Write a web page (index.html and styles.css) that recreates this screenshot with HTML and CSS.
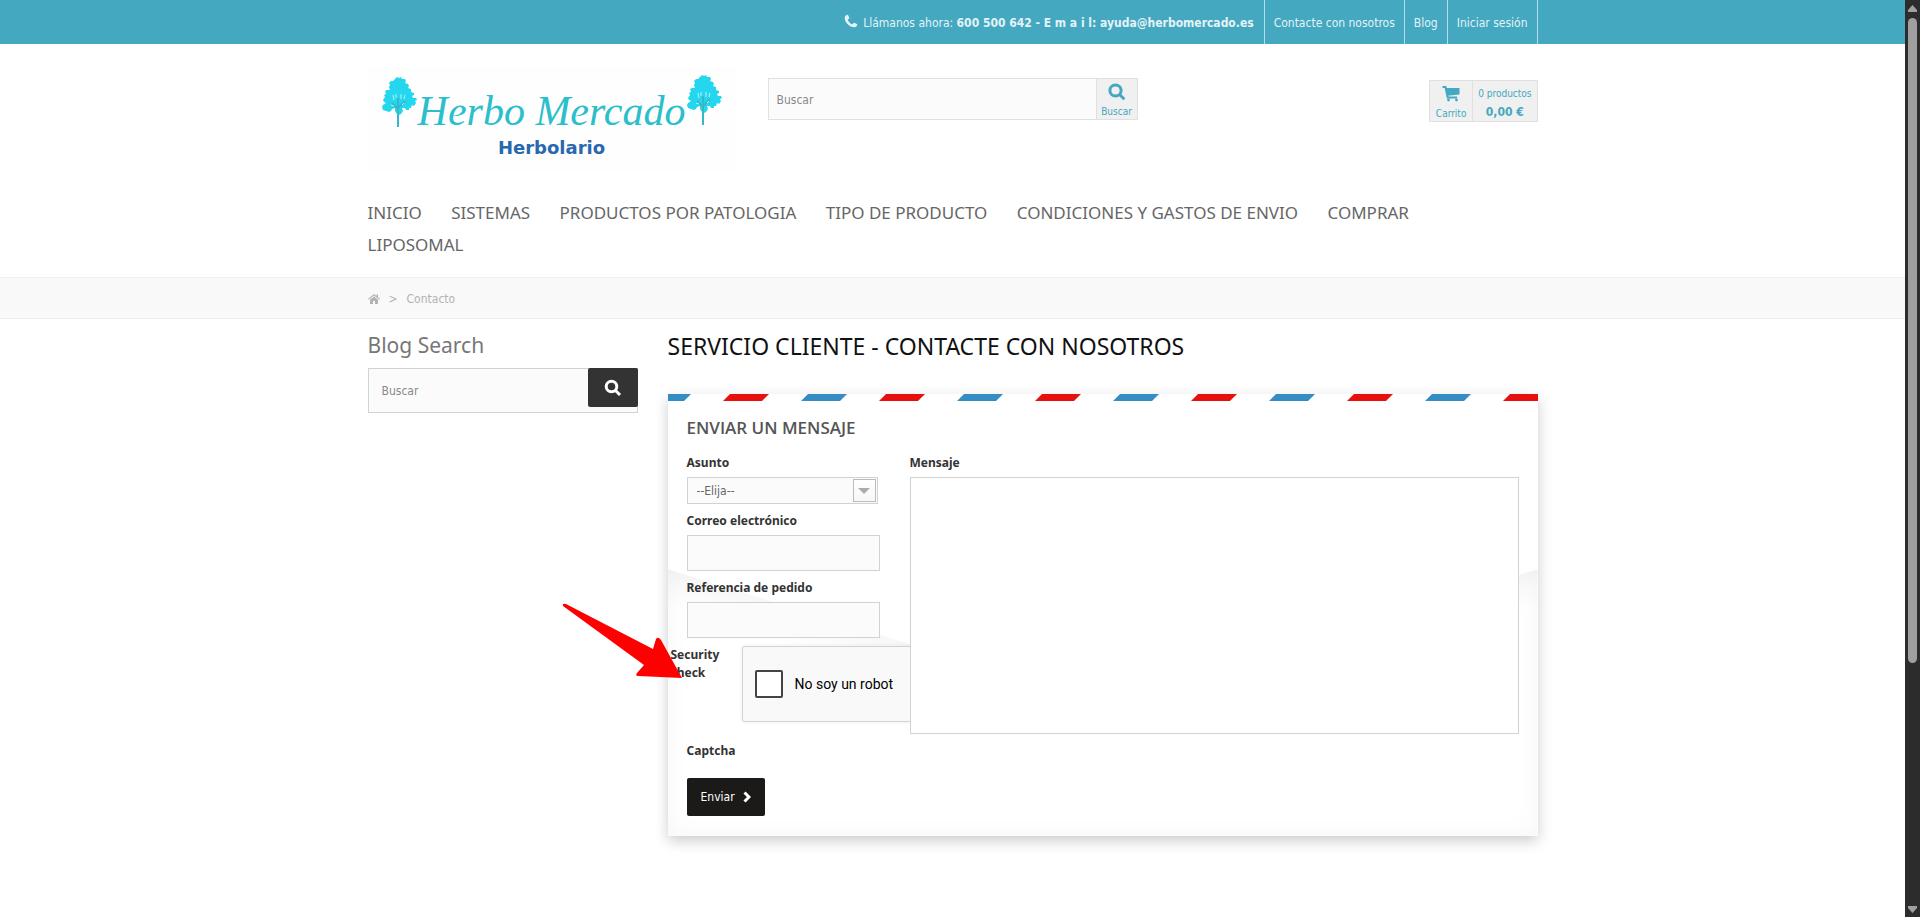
FILE: index.html
```html
<!DOCTYPE html>
<html lang="es">
<head>
<meta charset="utf-8">
<title>Contacto - Herbo Mercado</title>
<link rel="stylesheet" href="styles.css">
</head>
<body>
<div class="page">
  <div class="topbar">
    <div class="container topbar-row">
      <p class="phone">
        <svg class="phone-icon" viewBox="0 0 14 14" aria-hidden="true"><path d="M1 2.600C1.500 1.400 2.800.600 3.700.700c.400.100 1.600 2.600 1.600 3.200 0 .700-1.500 1.300-1.500 2 0 1 3.300 4.300 4.300 4.300.700 0 1.300-1.500 2-1.500.600 0 3.100 1.300 3.200 1.700.100.900-.700 2.200-1.900 2.700C6.500 14.500-.800 7.500 1 2.600z"/></svg>
        <span>Llámanos ahora: <strong>600 500 642 - E m a i l: ayuda@herbomercado.es</strong></span>
      </p>
      <nav class="topnav">
        <a href="#contacto">Contacte con nosotros</a>
        <a href="#blog">Blog</a>
        <a href="#sesion">Iniciar sesión</a>
      </nav>
    </div>
  </div>

  <header class="container header">
    <a class="logo" href="#inicio">
      <svg class="tree" viewBox="0 0 35 52" aria-hidden="true"><use href="#tree"/></svg>
      <span class="logo-text"><span class="logo-name">Herbo Mercado</span><span class="logo-sub">Herbolario</span></span>
      <svg class="tree tree-right" viewBox="0 0 35 52" aria-hidden="true">
        <g id="tree">
          <path d="M13 3l2-2 2 1 2-1 1 2 3 0 1 2-1 2 3 1 1 2-1 2 3 1 0 3 3 1 0 2-2 1 1 2 3 0 1 2-2 1 1 2-2 3-2-1-1 3-2 0 0 2-3 0-1-2-3 0 1 3-2 3-2 1-2-1-2-3 0-3-3 1-1 2-2 1-3-1-3-1-1-3 1-2 3-2-2-1-1-2 2-3-1-2 2-1-1-3 2-1 3 0-1-3 1-2-1-2 2-2 2 0z"/>
          <path class="trunk" d="M16 22v29M16 33l-6-6M16 32l7-7"/>
          <path class="gaps" d="M11 19l1 5M14 18l0 4M19 18l0 5M23 19l-1 4M9 29l3 1M20 29l2-2"/>
        </g>
      </svg>
    </a>
    <form class="search">
      <input type="text" placeholder="Buscar" aria-label="Buscar">
      <button type="button">
        <svg viewBox="0 0 18 18" aria-hidden="true"><circle cx="7.500" cy="7.500" r="5.600"/><path d="M11.800 11.800l4.500 4.500"/></svg>
        <span>Buscar</span>
      </button>
    </form>
    <a class="cart" href="#carrito">
      <span class="cart-label">
        <svg viewBox="0 0 18 16" aria-hidden="true"><path d="M.5 1h3l2.200 10.500H15" class="frame"/><path d="M4 2h13.500v6.500L5.500 9.800z"/><circle cx="6.500" cy="14" r="1.400"/><circle cx="14.500" cy="14" r="1.400"/></svg>
        <span>Carrito</span>
      </span>
      <span class="cart-total"><span>0 productos</span><strong>0,00 €</strong></span>
    </a>
  </header>

  <nav class="container menu">
    <a href="#inicio">INICIO</a>
    <a href="#sistemas">SISTEMAS</a>
    <a href="#patologia">PRODUCTOS POR PATOLOGIA</a>
    <a href="#tipo">TIPO DE PRODUCTO</a>
    <a href="#condiciones">CONDICIONES Y GASTOS DE ENVIO</a>
    <a href="#liposomal"><span>COMPRAR</span> <span>LIPOSOMAL</span></a>
  </nav>

  <div class="crumbs">
    <div class="container crumbs-row">
      <a href="#inicio" aria-label="Inicio"><svg viewBox="0 0 12 10" aria-hidden="true"><path d="M6 0L0 5l.7.800L6 1.500l5.300 4.300.7-.8-2-1.700V.5H8.500v1.500zM6 2.500L2 5.800V10h3V7h2v3h3V5.800z"/></svg></a>
      <span>&gt;</span>
      <span>Contacto</span>
    </div>
  </div>

  <div class="container columns">
    <aside>
      <h2>Blog Search</h2>
      <form class="blog-search">
        <input type="text" placeholder="Buscar" aria-label="Buscar en el blog">
        <button type="button" aria-label="Buscar"><svg viewBox="0 0 18 18" aria-hidden="true"><circle cx="7.500" cy="7.500" r="5.300"/><path d="M11.500 11.500l4.500 4.500"/></svg></button>
      </form>
    </aside>

    <main>
      <h1>SERVICIO CLIENTE - CONTACTE CON NOSOTROS</h1>
      <form class="card">
        <svg class="stripes" aria-hidden="true">
          <defs><pattern id="airmail" width="156" height="7" patternUnits="userSpaceOnUse">
            <path fill="#e6100f" d="M62 0h39l-7 7H55z"/>
            <path fill="#338cc2" d="M140 0h39l-7 7h-39zM-16 0h39l-7 7h-39z"/>
          </pattern></defs>
          <rect width="100%" height="7" fill="url(#airmail)"/>
        </svg>
        <div class="flap"></div>
        <div class="card-body">
          <h3>ENVIAR UN MENSAJE</h3>
          <div class="fields">
            <div class="left">
              <div class="field">
                <label for="asunto">Asunto</label>
                <div class="select">
                  <select id="asunto"><option>--Elija--</option></select>
                  <span class="select-arrow"></span>
                </div>
              </div>
              <div class="field">
                <label for="correo">Correo electrónico</label>
                <input id="correo" type="email">
              </div>
              <div class="field">
                <label for="pedido">Referencia de pedido</label>
                <input id="pedido" type="text">
              </div>
              <div class="security">
                <span class="security-label">Security check</span>
                <label class="robot"><input type="checkbox"><span>No soy un robot</span></label>
              </div>
              <span class="captcha">Captcha</span>
              <button class="send" type="button">Enviar <svg viewBox="0 0 8 12" aria-hidden="true"><path d="M1.500 1.500L6 6l-4.500 4.500"/></svg></button>
            </div>
            <div class="right">
              <label for="mensaje">Mensaje</label>
              <textarea id="mensaje"></textarea>
            </div>
          </div>
        </div>
      </form>
      <svg class="pointer" viewBox="0 0 122 78" aria-hidden="true"><path d="M3 4Q2 1 6 2L93 47 96 37Q98 34 101 38L122 76 78 74Q75 74 77 71L84 63z"/></svg>
    </main>
  </div>
</div>
<div class="scrollbar" aria-hidden="true">
  <svg viewBox="0 0 9 7"><path d="M4.500 0L9 5v2H0V5z"/></svg>
  <span class="thumb"></span>
  <svg viewBox="0 0 9 7"><path d="M4.500 7L9 2V0H0v2z"/></svg>
</div>
</body>
</html>
```
FILE: styles.css
```css
* { box-sizing: border-box; }
body {
  margin: 0;
  display: flex;
  height: 100vh;
  overflow: hidden;
  background: #fff;
  color: #333;
  font: 12px/18px "DejaVu Sans Condensed", "Noto Sans", sans-serif;
}
a { color: inherit; text-decoration: none; }
h1, h2, h3, p { margin: 0; font-weight: 400; }
h1, h2, h3, .menu { font-family: "Noto Sans", sans-serif; }
input, button, select, textarea { font: inherit; color: inherit; border-radius: 0; margin: 0; }
button { border: 0; padding: 0; }
.page { flex: 1; min-width: 0; }
.container { max-width: 1170px; margin: 0 auto; }

.topbar { background: #43a8c0; color: #e4f3f7; }
.topbar-row { display: flex; justify-content: flex-end; line-height: 42px; }
.phone { display: flex; align-items: center; gap: 5px; padding: 2px 10px 0 0; }
.phone-icon { width: 14px; height: 14px; margin-bottom: 4px; fill: #e4f3f7; }
.topnav { display: flex; border-left: 1px solid #b5dde6; }
.topnav a { padding: 2px 9px 0; border-right: 1px solid #b5dde6; }

.header { display: grid; grid-template-columns: 1fr 1fr 1fr; gap: 30px; padding: 23px 0 26px; align-items: start; }
.logo { display: flex; height: 104px; padding: 7px 0 0 14px; background: #fefefe; }
.tree { width: 35px; height: 52px; margin-top: 2px; fill: #25d6ef; flex: none; }
.tree-right { margin-top: 0; }
.trunk { fill: none; stroke: #35b9c9; stroke-width: 2; }
.gaps { fill: none; stroke: #b4f2fa; stroke-width: 1; }
.logo-text { flex: none; width: 270px; display: flex; flex-direction: column; align-items: center; white-space: nowrap; }
.logo-name { font: italic 42px/54px "Liberation Serif", serif; color: #2bbfcb; padding-top: 10px; }
.logo-sub { font: 700 18px/20px "DejaVu Sans", sans-serif; color: #2868ae; }
.search { display: flex; height: 42px; margin-top: 11px; border: 1px solid #e0e0e0; background: #fbfbfb; }
.search input { flex: 1; min-width: 0; border: 0; background: transparent; padding: 2px 8px 0; }
input::placeholder { color: #888; opacity: 1; }
.search button, .cart { color: #43a8c0; background: #f0f0f0; font-size: 10px; line-height: 14px; }
.search button { width: 41px; border-left: 1px solid #e0e0e0; display: flex; flex-direction: column; align-items: center; gap: 4px; padding-top: 4px; }
.search svg { width: 18px; height: 18px; fill: none; stroke: #43a8c0; stroke-width: 3; }
.cart { justify-self: end; display: flex; height: 42px; margin-top: 13px; border: 1px solid #e0e0e0; }
.cart-label { width: 43px; display: flex; flex-direction: column; align-items: center; gap: 5px; padding-top: 5px; border-right: 1px solid #e0e0e0; }
.cart-label svg { width: 18px; height: 16px; fill: #43a8c0; }
.cart-label .frame { fill: none; stroke: #43a8c0; stroke-width: 2; }
.cart-total { display: flex; flex-direction: column; align-items: center; gap: 4px; padding: 6px 5px 0; }
.cart-total strong { font-size: 12px; }

.menu { font-size: 17px; line-height: 32px; color: #666; padding: 0 60px 16px 0; }
.menu a { margin-right: 25px; }
.crumbs { background: #f9f9f9; border: solid #efefef; border-width: 1px 0; color: #b3b3b3; }
.crumbs-row { display: flex; align-items: center; gap: 9px; line-height: 38px; padding-top: 2px; }
.crumbs a { display: flex; }
.crumbs svg { width: 12px; height: 10px; fill: #b3b3b3; }

.columns { display: grid; grid-template-columns: 270px 1fr; gap: 30px; padding-top: 13px; }
h2 { font-size: 21px; line-height: 26px; color: #777; margin-bottom: 10px; }
.blog-search { display: flex; align-items: flex-start; height: 45px; border: 1px solid #d2d2d2; background: #fbfbfb; }
.blog-search input { flex: 1; min-width: 0; height: 43px; border: 0; background: transparent; padding: 0 13px; }
.blog-search button { width: 50px; height: 39px; margin: -1px -1px 0 0; border-radius: 2px; background: #333; }
.blog-search svg { width: 18px; height: 18px; display: block; margin: 0 auto; fill: none; stroke: #fff; stroke-width: 3; }

main { position: relative; min-width: 0; }
h1 { font-size: 23px; line-height: 28px; color: #111; margin-bottom: 34px; }
.card { position: relative; background: #fff; box-shadow: 0 5px 13px rgba(0, 0, 0, .2); }
.stripes { display: block; width: 100%; height: 7px; }
.flap {
  position: absolute;
  inset: 175px 0 0;
  background:
    linear-gradient(197deg, transparent 127px, rgba(0, 0, 0, .03) 128px, transparent 165px) left / 50% 100% no-repeat,
    linear-gradient(163deg, transparent 127px, rgba(0, 0, 0, .03) 128px, transparent 165px) right / 50% 100% no-repeat;
  box-shadow: inset 0 0 24px rgba(0, 0, 0, .04);
  clip-path: polygon(0 0, 50% 135px, 100% 0, 100% 100%, 0 100%);
}
.card-body { position: relative; padding: 16px 19px 20px; }
h3 { font: 700 17px/22px "Open Sans", sans-serif; font-weight: 600; color: #555; -webkit-text-stroke: 0; margin-bottom: 15px; }
.fields { display: grid; grid-template-columns: 193px 1fr; gap: 30px; }
.field { margin-bottom: 8px; }
.field label, .right label, .security-label, .captcha { display: block; font: 700 12px/18px "Noto Sans", sans-serif; color: #333; }
.field label, .right label { margin-bottom: 5px; }
.field input { display: block; width: 100%; height: 36px; border: 1px solid #d2d2d2; background: #fbfbfb; padding: 0 8px; }
.select { position: relative; width: 191px; }
.select select { appearance: none; display: block; width: 100%; height: 27px; border: 1px solid #d2d2d2; background: #fbfbfb; padding: 0 9px; color: #666; }
.select-arrow { position: absolute; top: 2px; right: 2px; width: 23px; height: 23px; border: 1px solid #bbb; background: linear-gradient(#fff, #f7f7f7); pointer-events: none; display: grid; place-items: center; }
.select-arrow::before { content: ""; border: solid transparent; border-width: 6px 6px 0; border-top-color: #aaa; }
.security { display: flex; margin-left: -16px; width: 375px; }
.security-label { width: 71px; flex: none; padding-right: 10px; }
.robot { width: 304px; height: 76px; display: flex; align-items: center; gap: 12px; padding-left: 12px; background: #f9f9f9; border: 1px solid #d3d3d3; border-radius: 3px; box-shadow: 0 0 4px rgba(0, 0, 0, .08); color: #000; font: 14px/18px Roboto, sans-serif; }
.robot input { appearance: none; width: 28px; height: 28px; margin: 0; border: 2px solid #444; border-radius: 2px; background: #fff; }
.captcha { margin: 20px 0 18px; }
.send { display: flex; align-items: center; gap: 8px; height: 38px; padding: 0 14px; border-radius: 2px; background: #1b1a19; color: #fff; }
.send svg { width: 8px; height: 12px; fill: none; stroke: #fff; stroke-width: 3; }
.right { position: relative; }
.right textarea { display: block; width: 100%; height: 257px; resize: none; border: 1px solid #d2d2d2; background: #fff; padding: 8px; }
.pointer { position: absolute; top: 270px; left: -108px; width: 122px; height: 78px; fill: red; }

.scrollbar { width: 15px; flex: none; background: #2c2c2c; display: flex; flex-direction: column; align-items: center; padding: 5px 0 4px; }
.scrollbar svg { width: 9px; height: 7px; fill: #9f9f9f; }
.thumb { width: 9px; height: 71%; margin: 6px 0 auto; border-radius: 5px; background: #9f9f9f; }
```
